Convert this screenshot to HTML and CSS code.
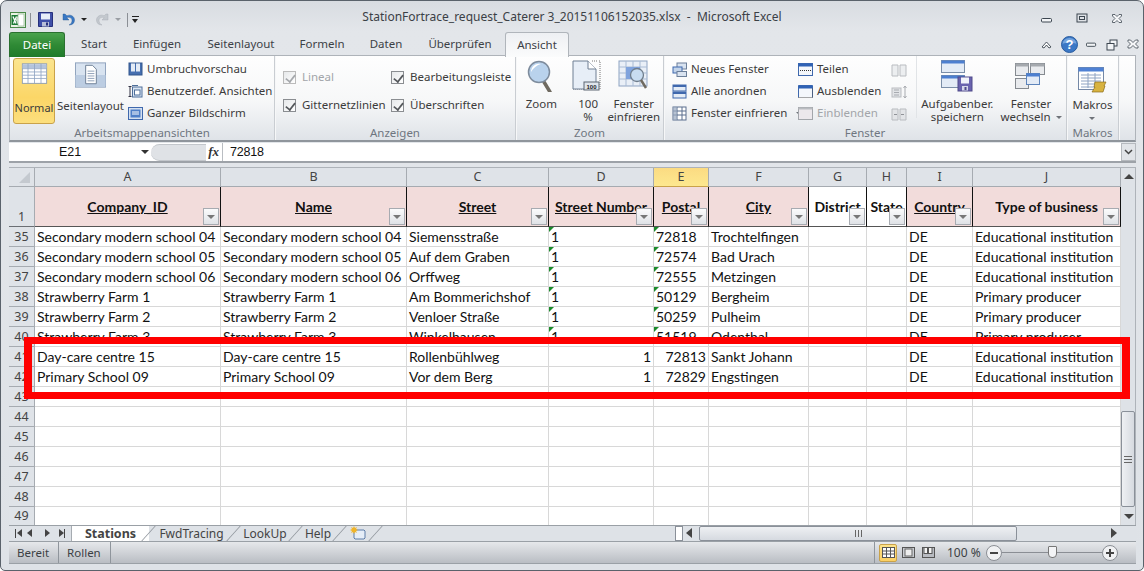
FILE: index.html
```html
<!DOCTYPE html>
<html lang="de">
<head>
<meta charset="utf-8">
<title>StationFortrace_request_Caterer 3_20151106152035.xlsx - Microsoft Excel</title>
<link rel="stylesheet" href="styles.css">
</head>
<body>
<div class="window">
  <header class="titlebar">
    <div class="qat">
      <svg class="i16" viewBox="0 0 16 16"><rect x=".5" y=".5" width="15" height="15" fill="#e9f3e4" stroke="#4b8a4a"/><rect x="8" y="2" width="6" height="12" fill="#fff" stroke="#7aa97a" stroke-width=".6"/><path d="M1.5 3h6.500l-2 5 2 5H1.500z" fill="#1d7a35"/><path d="M3 4.500l3 7M6.500 4.500l-3 7" stroke="#fff" stroke-width="1.300"/></svg>
      <span class="qsep"></span>
      <svg class="i15" viewBox="0 0 15 15"><path d="M.5.500h14v14H.5z" fill="#3f4fa8" stroke="#27307c"/><rect x="3" y="1.500" width="9" height="6" fill="#e8eef8"/><rect x="4" y="10" width="7" height="4.500" fill="#b9bfd8"/><rect x="8" y="10.500" width="2" height="3" fill="#27307c"/></svg>
      <svg class="i15 undo" viewBox="0 0 15 15"><path d="M2 2v6h6L5.800 5.800C8.500 4.600 11 6 11 8.500c0 2-1 3.500-3 4.500 3.500 0 5.500-2 5.500-5 0-4-4.500-6-7.600-4.200L4 2z" fill="#3978c4" stroke="#25568f" stroke-width=".4"/></svg>
      <span class="caret"></span>
      <svg class="i15 redo" viewBox="0 0 15 15"><path d="M13 2v6H7l2.200-2.200C6.500 4.600 4 6 4 8.500c0 2 1 3.500 3 4.500-3.500 0-5.500-2-5.500-5 0-4 4.500-6 7.600-4.200L11 2z" fill="#c3c8ce" stroke="#a4a9b0" stroke-width=".4"/></svg>
      <span class="caret off"></span>
      <span class="qsep second"></span>
      <span class="qatmenu"></span>
    </div>
    <div class="doctitle">StationFortrace_request_Caterer 3_20151106152035.xlsx&nbsp; -&nbsp; Microsoft Excel</div>
    <div class="winctl">
      <svg class="ctl" viewBox="0 0 12 12"><rect x=".5" y="5.500" width="10" height="3.500" rx="1" fill="#f2f4f6" stroke="#3c4650"/></svg>
      <svg class="ctl" viewBox="0 0 12 12"><rect x="1" y="1" width="10" height="8" fill="none" stroke="#3c4650"/><rect x="3.500" y="3.500" width="5" height="3" fill="none" stroke="#3c4650"/></svg>
      <svg class="ctl" viewBox="0 0 12 12"><path d="M1.500 1.500h2.500L6 3.500l2-2h2.500v1.500L8 5.500 10.500 8v1.500H8l-2-2-2 2H1.500V8L4 5.500 1.500 3z" fill="#f5f6f8" stroke="#3c4650" stroke-width=".8"/></svg>
    </div>
  </header>

  <nav class="tabs">
    <div class="tab file">Datei</div>
    <div class="tab">Start</div>
    <div class="tab">Einfügen</div>
    <div class="tab">Seitenlayout</div>
    <div class="tab">Formeln</div>
    <div class="tab">Daten</div>
    <div class="tab">Überprüfen</div>
    <div class="tab active">Ansicht</div>
    <div class="tabctl">
      <svg class="s11" viewBox="0 0 11 11"><path d="M1 8l4.500-5L10 8 8 9 5.500 6 3 9z" fill="#fff" stroke="#3c4650" stroke-width=".9"/></svg>
      <svg class="help" viewBox="0 0 17 17"><circle cx="8.500" cy="8.500" r="8" fill="#3b78c6" stroke="#2a5c9e"/><path d="M1.500 8a7 6 0 0 1 14 0c-4 -2-10 -2-14 0z" fill="#8fb8e8" opacity=".7"/><text x="8.500" y="13" class="qmark">?</text></svg>
      <svg class="s11" viewBox="0 0 12 12"><rect x=".5" y="4.500" width="10" height="3.500" rx="1" fill="#f2f4f6" stroke="#3c4650"/></svg>
      <svg class="s12" viewBox="0 0 12 12"><rect x="4" y="1" width="7" height="6" fill="#f2f4f6" stroke="#3c4650"/><rect x="1" y="4.500" width="7" height="6.500" fill="#f2f4f6" stroke="#3c4650"/></svg>
      <svg class="s12" viewBox="0 0 12 12"><path d="M1 1h2.500L6 3.500 8.500 1H11v1.500L8.500 5 11 7.500V9H8.500L6 6.500 3.500 9H1V7.500L3.500 5 1 2.500z" fill="#f5f6f8" stroke="#3c4650" stroke-width=".8"/></svg>
    </div>
  </nav>

  <section class="ribbon">
    <div class="group g-views">
      <div class="gbody">
        <div class="big selected normal">
          <svg class="bigicon" viewBox="0 0 32 32"><rect x="1" y="1" width="30" height="24" fill="#fff" stroke="#7f93b0"/><rect x="1.500" y="1.500" width="29" height="5" fill="#b4c4dc"/><path d="M1 7h30M1 11h30M1 15h30M1 19h30M8 1v24M16 1v24M24 1v24" stroke="#8ea3c2" stroke-width="1"/></svg>
          <span>Normal</span>
        </div>
        <div class="big pagelayout">
          <svg class="bigicon wide" viewBox="0 0 32 26"><rect x=".5" y=".5" width="31" height="25" fill="#d8e3f0" stroke="#8fa3bd"/><path d="M.5 13h31v12H.5z" fill="#bccde2"/><path d="M11 3h7l4 4v15H11z" fill="#fff" stroke="#6d7f96"/><path d="M13 9h7M13 11.500h7M13 14h7M13 16.500h7M13 19h7" stroke="#8ea0b8"/></svg>
          <span>Seitenlayout</span>
        </div>
        <ul class="smalllist">
          <li><svg class="sic" viewBox="0 0 15 15"><rect x="1" y="1" width="13" height="12" fill="#466fb0" stroke="#33568c"/><rect x="3" y="1.500" width="4" height="8" fill="#e4ebf5"/><rect x="8" y="1.500" width="4" height="8" fill="#e4ebf5"/></svg>Umbruchvorschau</li>
          <li><svg class="sic" viewBox="0 0 15 15"><path d="M.5 2.500h3M2 2.500v10M.5 12.500h3" stroke="#334" fill="none"/><rect x="4.500" y="3" width="9.500" height="10" fill="#dbe6f3" stroke="#4f6f9a"/><rect x="6.500" y="6" width="5.500" height="5" fill="#fff" stroke="#4f6f9a"/><path d="M4 1h6v1H4z" fill="#4f6f9a"/></svg>Benutzerdef. Ansichten</li>
          <li><svg class="sic" viewBox="0 0 15 15"><rect x=".5" y="1.500" width="14" height="12" fill="#d4e0f0" stroke="#3f68ad"/><rect x="2.500" y="3.500" width="10" height="8" fill="#4f7fc7"/><path d="M4 6h7M4 8h7" stroke="#fff"/></svg>Ganzer Bildschirm</li>
        </ul>
      </div>
      <div class="glabel">Arbeitsmappenansichten</div>
    </div>

    <div class="group g-show">
      <div class="gbody checks">
        <label class="chk off"><span class="box"></span>Lineal</label>
        <label class="chk"><span class="box"></span>Bearbeitungsleiste</label>
        <label class="chk"><span class="box"></span>Gitternetzlinien</label>
        <label class="chk"><span class="box"></span>Überschriften</label>
      </div>
      <div class="glabel">Anzeigen</div>
    </div>

    <div class="group g-zoom">
      <div class="gbody zoomrow">
        <div class="big">
          <svg class="icon32" viewBox="0 0 32 32"><path d="M19 22l6 10" stroke="#6f6a60" stroke-width="3.500" stroke-linecap="round"/><circle cx="14" cy="12" r="10.500" fill="#b9d2ec" stroke="#7d8b9c" stroke-width="1.500"/><path d="M6 12a8 8 0 0 1 10-8c-4 1-8 4-10 8z" fill="#fff"/></svg>
          <span>Zoom</span>
        </div>
        <div class="big">
          <svg class="icon32" viewBox="0 0 32 32"><path d="M20 1h5M27 1h1v28h-1M1 29h26" fill="none" stroke="#777" stroke-dasharray="1 1"/><path d="M1 1h15l8 8v20H1z" fill="#e7eef7" stroke="#6f7f93"/><path d="M16 1v8h8" fill="#fff" stroke="#6f7f93"/><rect x="12" y="22" width="15" height="8" fill="#dfe5ec" stroke="#5d6672"/><text x="19.500" y="29" class="hundred">100</text></svg>
          <span>100<br>%</span>
        </div>
        <div class="big">
          <svg class="icon32" viewBox="0 0 32 32"><rect x="1" y="1" width="28" height="25" fill="#e9eff7" stroke="#8ea3c2"/><path d="M1 7h28M1 13h28M1 19h28M8 1v25M15 1v25M22 1v25" stroke="#a9bbd4"/><rect x="8" y="7" width="14" height="12" fill="#7fa3dd"/><circle cx="19" cy="15" r="6.500" fill="#c8dcf0" stroke="#6f7d8c" stroke-width="1.300"/><path d="M23 20l5 8" stroke="#6f6a60" stroke-width="2.500"/></svg>
          <span>Fenster<br>einfrieren</span>
        </div>
      </div>
      <div class="glabel">Zoom</div>
    </div>

    <div class="group g-window">
      <div class="gbody windowrow">
        <ul class="smalllist col1">
          <li><svg class="sic" viewBox="0 0 15 15"><rect x="5" y="1" width="9.500" height="6" fill="#d9e3f0" stroke="#6c7f99"/><rect x="1" y="5" width="9" height="6" fill="#c3d4ea" stroke="#3f68ad"/><rect x="5" y="9.500" width="9.500" height="5" fill="#d9e3f0" stroke="#6c7f99"/></svg>Neues Fenster</li>
          <li><svg class="sic" viewBox="0 0 15 15"><rect x="1" y="1" width="13" height="6" fill="#e4ecf6" stroke="#3f68ad"/><rect x="1" y="1" width="13" height="2" fill="#3f68ad"/><rect x="1" y="8" width="13" height="6" fill="#e4ecf6" stroke="#3f68ad"/><rect x="1" y="8" width="13" height="2" fill="#3f68ad"/></svg>Alle anordnen</li>
          <li><svg class="sic" viewBox="0 0 15 15"><rect x="1" y="1" width="13" height="13" fill="#fff" stroke="#5b6f8e"/><path d="M1 5h13M1 9h13M5 1v13M10 1v13" stroke="#5b6f8e"/><rect x="1" y="1" width="4" height="13" fill="#98a8bf" opacity=".7"/></svg>Fenster einfrieren<span class="dd"></span></li>
        </ul>
        <ul class="smalllist col2">
          <li><svg class="sic" viewBox="0 0 15 15"><rect x=".5" y="1.500" width="14" height="12" fill="#f4f7fb" stroke="#3f68ad"/><rect x=".5" y="1.500" width="14" height="3" fill="#2f62b5"/><path d="M2 8.500h11" stroke="#333" stroke-dasharray="1 1"/></svg>Teilen</li>
          <li><svg class="sic" viewBox="0 0 15 15"><path d="M.5 13.500v-12h14v12" fill="#f4f7fb" stroke="#3f68ad"/><rect x=".5" y="1.500" width="14" height="3" fill="#2f62b5"/><path d="M.5 13.500h14M14.500 13.500V4" fill="none" stroke="#555" stroke-dasharray="1 1"/></svg>Ausblenden</li>
          <li class="off"><svg class="sic" viewBox="0 0 15 15"><rect x=".5" y="1.500" width="14" height="12" fill="#ece8ec" stroke="#a3a6ab"/><rect x=".5" y="1.500" width="14" height="2" fill="#b9bcc0"/></svg>Einblenden</li>
        </ul>
        <div class="compare">
          <svg class="cmp" viewBox="0 0 16 14"><path d="M1 2h6v11H1zM9 2h6v11H9z" fill="#eceef0" stroke="#b9bcc0"/></svg>
          <svg class="cmp" viewBox="0 0 16 14"><rect x="1" y="3" width="9" height="9" fill="#e2e4e7" stroke="#b9bcc0"/><path d="M3 5h5M3 7.500h5M3 10h5" stroke="#a8abb0"/><path d="M14 1v12M12.500 3L14 1l1.500 2M12.500 11l1.500 2 1.500-2" fill="none" stroke="#a8abb0"/></svg>
          <svg class="cmp" viewBox="0 0 16 14"><path d="M1 2h6v11H1zM9 2h6v11H9z" fill="#e2e4e7" stroke="#b9bcc0"/><path d="M3 7.500h3M10 7.500h3" stroke="#8f9297"/></svg>
        </div>
        <div class="big save">
          <svg class="icon32 wider" viewBox="0 0 32 32"><rect x=".5" y=".5" width="23" height="12" fill="#e3ebf6" stroke="#7b8ea8"/><rect x=".5" y=".5" width="23" height="3" fill="#4d7fd0"/><rect x=".5" y="15.500" width="23" height="12" fill="#e3ebf6" stroke="#7b8ea8"/><rect x=".5" y="15.500" width="23" height="3" fill="#4d7fd0"/><rect x="17" y="17" width="14" height="14" fill="#6a63ae" stroke="#4f4a8a"/><rect x="20" y="17.500" width="8" height="6" fill="#f1f3fa"/><rect x="21" y="26" width="6" height="4.500" fill="#d6d8ea"/><rect x="23.500" y="27" width="2" height="3" fill="#4f4a8a"/></svg>
          <span>Aufgabenber.<br>speichern</span>
        </div>
        <div class="big switch">
          <svg class="icon32 wider" viewBox="0 0 32 32"><rect x=".5" y="3.500" width="13" height="12" fill="#e9ebee" stroke="#858a90"/><rect x=".5" y="3.500" width="13" height="3" fill="#a5a9ae"/><rect x="15.500" y="3.500" width="14" height="11" fill="#e9ebee" stroke="#858a90"/><rect x="15.500" y="3.500" width="14" height="3" fill="#a5a9ae"/><rect x=".5" y="18.500" width="13" height="10" fill="#e9ebee" stroke="#858a90"/><rect x="11.500" y="13.500" width="13" height="11" fill="#e3ebf6" stroke="#5d84bb"/><rect x="11.500" y="13.500" width="13" height="3" fill="#4d7fd0"/></svg>
          <span>Fenster<br>wechseln<i class="dd"></i></span>
        </div>
      </div>
      <div class="glabel">Fenster</div>
    </div>

    <div class="group g-macro">
      <div class="gbody macrorow">
        <div class="big">
          <svg class="icon30" viewBox="0 0 30 26"><rect x=".5" y=".5" width="25" height="22" fill="#fff" stroke="#7488a6"/><rect x=".5" y=".5" width="25" height="4" fill="#4f81d4"/><path d="M3 8h20M3 11h20M3 14h20M3 17h20M3 20h20M10 6v15M17 6v15" stroke="#8ea3c2"/><path d="M17 15h11l-2 4h1l-2 6H14l3-5h-1z" fill="#d8b340" stroke="#8c6f1d" stroke-width=".7"/></svg>
          <span>Makros<br><i class="dd solo"></i></span>
        </div>
      </div>
      <div class="glabel">Makros</div>
    </div>
  </section>

  <div class="formula">
    <div class="namebox">E21<span class="ncaret"></span></div>
    <div class="fxzone"><span class="oval"></span><span class="fx">fx</span></div>
    <div class="fvalue">72818</div>
    <div class="fdrop"><svg class="chev" viewBox="0 0 9 6"><path d="M1 1l3.500 3.500L8 1" fill="none" stroke="#444" stroke-width="1.500"/></svg></div>
  </div>

  <main class="workbook">
    <table class="sheet">
      <colgroup><col class="c0"><col class="c1"><col class="c1"><col class="c3"><col class="c4"><col class="c5"><col class="c6"><col class="c7"><col class="c8"><col class="c9"><col class="c10"></colgroup>
      <thead>
        <tr class="letters"><th class="corner"><span class="tri"></span></th><th>A</th><th>B</th><th>C</th><th>D</th><th class="sel">E</th><th>F</th><th>G</th><th>H</th><th>I</th><th>J</th></tr>
      </thead>
      <tbody>
        <tr class="head">
          <th class="rn">1</th>
          <td><u>Company_ID</u><span class="filter"></span></td>
          <td><u>Name</u><span class="filter"></span></td>
          <td><u>Street</u><span class="filter"></span></td>
          <td><u>Street Number</u><span class="filter"></span></td>
          <td><u>Postal</u><span class="filter"></span></td>
          <td><u>City</u><span class="filter"></span></td>
          <td class="plain">District<span class="filter"></span></td>
          <td class="plain">State<span class="filter"></span></td>
          <td><u>Country</u><span class="filter"></span></td>
          <td>Type of business<span class="filter"></span></td>
        </tr>
        <tr><th class="rn">35</th><td>Secondary modern school 04</td><td>Secondary modern school 04</td><td>Siemensstraße</td><td class="txt">1</td><td class="txt">72818</td><td>Trochtelfingen</td><td></td><td></td><td>DE</td><td>Educational institution</td></tr>
        <tr><th class="rn">36</th><td>Secondary modern school 05</td><td>Secondary modern school 05</td><td>Auf dem Graben</td><td class="txt">1</td><td class="txt">72574</td><td>Bad Urach</td><td></td><td></td><td>DE</td><td>Educational institution</td></tr>
        <tr><th class="rn">37</th><td>Secondary modern school 06</td><td>Secondary modern school 06</td><td>Orffweg</td><td class="txt">1</td><td class="txt">72555</td><td>Metzingen</td><td></td><td></td><td>DE</td><td>Educational institution</td></tr>
        <tr><th class="rn">38</th><td>Strawberry Farm 1</td><td>Strawberry Farm 1</td><td>Am Bommerichshof</td><td class="txt">1</td><td class="txt">50129</td><td>Bergheim</td><td></td><td></td><td>DE</td><td>Primary producer</td></tr>
        <tr><th class="rn">39</th><td>Strawberry Farm 2</td><td>Strawberry Farm 2</td><td>Venloer Straße</td><td class="txt">1</td><td class="txt">50259</td><td>Pulheim</td><td></td><td></td><td>DE</td><td>Primary producer</td></tr>
        <tr><th class="rn">40</th><td>Strawberry Farm 3</td><td>Strawberry Farm 3</td><td>Winkelhausen</td><td class="txt">1</td><td class="txt">51519</td><td>Odenthal</td><td></td><td></td><td>DE</td><td>Primary producer</td></tr>
        <tr><th class="rn">41</th><td>Day-care centre 15</td><td>Day-care centre 15</td><td>Rollenbühlweg</td><td class="num">1</td><td class="num">72813</td><td>Sankt Johann</td><td></td><td></td><td>DE</td><td>Educational institution</td></tr>
        <tr><th class="rn">42</th><td>Primary School 09</td><td>Primary School 09</td><td>Vor dem Berg</td><td class="num">1</td><td class="num">72829</td><td>Engstingen</td><td></td><td></td><td>DE</td><td>Educational institution</td></tr>
        <tr><th class="rn">43</th><td></td><td></td><td></td><td></td><td></td><td></td><td></td><td></td><td></td><td></td></tr>
        <tr><th class="rn">44</th><td></td><td></td><td></td><td></td><td></td><td></td><td></td><td></td><td></td><td></td></tr>
        <tr><th class="rn">45</th><td></td><td></td><td></td><td></td><td></td><td></td><td></td><td></td><td></td><td></td></tr>
        <tr><th class="rn">46</th><td></td><td></td><td></td><td></td><td></td><td></td><td></td><td></td><td></td><td></td></tr>
        <tr><th class="rn">47</th><td></td><td></td><td></td><td></td><td></td><td></td><td></td><td></td><td></td><td></td></tr>
        <tr><th class="rn">48</th><td></td><td></td><td></td><td></td><td></td><td></td><td></td><td></td><td></td><td></td></tr>
        <tr class="last"><th class="rn">49</th><td></td><td></td><td></td><td></td><td></td><td></td><td></td><td></td><td></td><td></td></tr>
      </tbody>
    </table>
    <div class="vscroll">
      <span class="arrow up"></span>
      <span class="vthumb"><span class="grip"></span></span>
      <span class="arrow down"></span>
    </div>
    <div class="callout"></div>
  </main>

  <div class="sheetbar">
    <div class="navs"><span class="nv first"></span><span class="nv prev"></span><span class="nv next"></span><span class="nv lastn"></span></div>
    <div class="stab current">Stations</div>
    <div class="stab fwd">FwdTracing</div>
    <div class="stab look">LookUp</div>
    <div class="stab hlp">Help</div>
    <div class="stab new"><svg class="newsheet" viewBox="0 0 16 14"><path d="M4 4h10l1 1v7l-1 1H5l-1-1z" fill="#e5edf7" stroke="#5d7ca8"/><path d="M4 0l1 2 2-1-1 2 2 1-2 1 1 2-2-1-1 2-1-2-2 1 1-2-2-1 2-1-1-2 2 1z" fill="#f0b429"/></svg></div>
    <div class="spacer"></div>
    <div class="splitter"></div>
    <div class="hscroll">
      <span class="arrow left"></span>
      <span class="hthumb"><span class="hgrip"></span></span>
      <span class="arrow right"></span>
    </div>
    <div class="cornerbox"></div>
  </div>

  <footer class="status">
    <span class="st">Bereit</span>
    <span class="st">Rollen</span>
    <span class="spacer"></span>
    <div class="views">
      <span class="vb on"><svg class="vic" viewBox="0 0 13 11"><rect x=".5" y=".5" width="12" height="10" fill="#fff" stroke="#555"/><path d="M.5 4h12M.5 7h12M4.500.500v10M8.500.500v10" stroke="#555"/></svg></span>
      <span class="vb"><svg class="vic" viewBox="0 0 13 11"><rect x=".5" y=".5" width="12" height="10" fill="#c9ccd1" stroke="#555"/><rect x="3" y="2" width="7" height="7" fill="#eee" stroke="#666"/></svg></span>
      <span class="vb"><svg class="vic" viewBox="0 0 13 11"><rect x=".5" y=".5" width="12" height="10" fill="#b9bcc2" stroke="#555"/><rect x="2" y=".5" width="3.500" height="6" fill="#f4f4f4" stroke="#555"/><rect x="6.500" y=".5" width="3.500" height="6" fill="#f4f4f4" stroke="#555"/></svg></span>
    </div>
    <span class="pct">100 %</span>
    <div class="slider">
      <svg class="rb" viewBox="0 0 16 16"><circle cx="8" cy="8" r="7.500" fill="#f0f1f3" stroke="#8a8e94"/><rect x="4" y="7" width="8" height="2" fill="#444"/></svg>
      <span class="track"><span class="thumb"></span></span>
      <svg class="rb" viewBox="0 0 16 16"><circle cx="8" cy="8" r="7.500" fill="#f0f1f3" stroke="#8a8e94"/><path d="M4 7h3V4h2v3h3v2H9v3H7V9H4z" fill="#444"/></svg>
    </div>
    <span class="sgrip"></span>
  </footer>
</div>
</body>
</html>
```
FILE: styles.css
```css
* { box-sizing: border-box; }
html, body { margin: 0; padding: 0; height: 100%; background: #fff; overflow: hidden; }
svg { display: block; flex: none; }
ul { list-style: none; margin: 0; padding: 0; }

.window {
  width: 1144px; height: 571px;
  display: flex; flex-direction: column;
  padding: 0 7px 0 8px;
  background: linear-gradient(#d8dce1, #e3e6ea 30px, #dee2e7);
  border: 1px solid #5a626b;
  border-radius: 7px 7px 5px 5px;
  font: 11.500px/14px "Noto Sans", sans-serif;
  color: #3b3b3b;
  position: relative;
}

/* title bar */
.titlebar { height: 31px; margin-left: -7px; margin-right: -6px; display: flex; align-items: flex-start; position: relative; flex: none; }
.qat { display: flex; align-items: center; margin: 10px 0 0 8px; height: 17px; }
.i16 { width: 16px; height: 16px; }
.i15 { width: 15px; height: 15px; }
.qsep { width: 1px; height: 14px; background: #8b8f95; margin: 0 7px 0 4px; }
.qsep.second { margin: 0 4px 0 6px; }
.undo { margin-left: 8px; }
.redo { margin-left: 8px; }
.caret { width: 0; height: 0; margin-left: 5px; border: 3px solid transparent; border-top: 3px solid #222; border-bottom: 0; }
.caret.off { border-top-color: #9a9ea4; }
.qatmenu { width: 7px; height: 7px; border-top: 1px solid #222; position: relative; }
.qatmenu::after { content: ""; position: absolute; left: 0; top: 2px; border: 3.500px solid transparent; border-top: 4px solid #222; border-bottom: 0; }
.doctitle { position: absolute; left: 0; right: 0; top: 8px; text-align: center; font-size: 12px; line-height: 16px; color: #3b4045; padding-left: 0; white-space: nowrap; }
.winctl { position: absolute; right: 19px; top: 12px; display: flex; gap: 23px; }
.ctl { width: 12px; height: 12px; }

/* tabs */
.tabs { height: 24px; display: grid; grid-template-columns: 56px 58px 68px 100px 62px 66px 82px 68px 1fr; flex: none; position: relative; z-index: 1; margin-bottom: -1px; }
.tab { line-height: 24px; text-align: center; color: #3c4146; white-space: nowrap; }
.tab.file { background: linear-gradient(#4aa24d, #2f8a35 50%, #1f7a2b); color: #fff; border: 1px solid #2a7030; border-bottom: 0; border-radius: 3px 3px 0 0; }
.tab.active { margin-left: 4px; background: linear-gradient(#eef0f3, #fbfcfc); border: 1px solid #b0b5bb; border-bottom: 0; border-radius: 3px 3px 0 0; }
.tabctl { display: flex; justify-content: flex-end; align-items: center; margin-right: -3px; }
.s11 { width: 11px; height: 11px; margin-right: 9px; }
.s12 { width: 12px; height: 12px; margin-left: 9px; }
.tabctl .s11:nth-child(3) { margin: 0; margin-left: 8px; }
.help { width: 17px; height: 17px; }
.qmark { font: bold 13px "Liberation Sans", sans-serif; fill: #fff; text-anchor: middle; }

/* ribbon */
.ribbon { height: 87px; display: grid; grid-template-columns: 265px 241px 148px 403px 52px 1fr; background: linear-gradient(#fefefe, #f6f7f8 55%, #dfe3e8); border: 1px solid #aeb3b9; border-bottom: 2px solid #8f959c; flex: none; }
.group { display: flex; flex-direction: column; border-right: 1px solid #c9cdd2; box-shadow: 1px 0 0 #f6f7f8; min-width: 0; }
.gbody { height: 70px; display: flex; }
.glabel { text-align: center; line-height: 14px; padding-top: 0; color: #6f7680; font-size: 11.500px; }
.big { display: flex; flex-direction: column; align-items: center; text-align: center; line-height: 13px; color: #3b3b3b; white-space: nowrap; }
.big span { display: block; }
.big.selected { background: linear-gradient(#fbe58f, #fbd667 60%, #fcdf7d); border: 1px solid #c9a24a; border-radius: 3px; }
.normal { width: 42px; height: 66px; margin: 2px 0 0 3px; padding-top: 4px; font-size: 11px; }
.normal .bigicon { margin-left: 0; }
.bigicon { width: 31px; height: 26px; margin-bottom: 8px; }
.normal span { margin-top: 4px; }
.pagelayout { width: 71px; padding-top: 6px; }
.pagelayout span { margin-top: 6px; }
.bigicon.wide { margin-bottom: 5px; }
.smalllist { display: flex; flex-direction: column; padding-top: 2px; white-space: nowrap; }
.smalllist li { height: 22px; display: flex; align-items: center; gap: 4px; }
.smalllist li.off { color: #a2a5a9; }
.sic { width: 15px; height: 15px; }
.g-views .smalllist { margin-left: 2px; }

.checks { display: grid; grid-template-columns: 108px 1fr; grid-template-rows: 14px 14px; row-gap: 14px; padding: 14px 0 0 8px; }
.chk { display: flex; align-items: center; gap: 6px; white-space: nowrap; }
.chk.off { color: #a2a5a9; }
.box { width: 13px; height: 13px; border: 1px solid #8a8d91; background: linear-gradient(135deg, #e6e8ea, #fff); position: relative; flex: none; }
.box::after { content: ""; position: absolute; left: 3px; top: 0; width: 5px; height: 9px; border-right: 2px solid #55585c; border-bottom: 2px solid #55585c; transform: rotate(38deg) scale(.85); }
.chk.off .box { border-color: #bbb; }
.chk.off .box::after { border-color: #a5a8ac; }

.zoomrow { padding: 4px 0 0 0; }
.g-zoom .big:nth-child(1) { width: 52px; margin-left: 0; }
.g-zoom .big:nth-child(2) { width: 38px; margin-left: 3px; }
.g-zoom .big:nth-child(3) { width: 60px; margin-left: -2px; }
.icon32 { width: 32px; height: 32px; margin-bottom: 5px; }
.icon30 { width: 30px; height: 26px; margin: 7px 0 5px; }
.icon32.wider { width: 32px; }
.hundred { font: bold 6px "Liberation Sans", sans-serif; text-anchor: middle; fill: #222; }

.windowrow { padding-top: 0; }
.g-window .col1 { width: 126px; margin-left: 8px; }
.g-window .col2 { width: 96px; }
.g-window .smalllist li { gap: 4px; }
.dd { display: inline-block; width: 0; height: 0; margin-left: 5px; border: 3px solid transparent; border-top: 3px solid #6f7379; border-bottom: 0; vertical-align: middle; }
.dd.solo { margin: 0; }
.compare { width: 26px; display: flex; flex-direction: column; padding-top: 7px; gap: 8px; border-right: 1px solid #e1e4e7; height: 62px; box-shadow: 0 0 0 transparent; }
.cmp { width: 16px; height: 14px; }
.save { width: 84px; margin-left: 0; padding-top: 4px; }
.switch { width: 72px; margin-left: -2px; padding-top: 4px; }
.macrorow { justify-content: center; }
.macrorow .big { padding-top: 4px; width: 52px; }

/* formula bar */
.formula { height: 20px; margin-top: 1px; display: flex; background: #fff; border: 1px solid #9da2a8; border-width: 0 0 2px; flex: none; font: 12.500px/18px "Liberation Sans", sans-serif; color: #111; }
.namebox { width: 142px; padding-left: 50px; position: relative; }
.ncaret { position: absolute; right: 2px; top: 7px; border: 4px solid transparent; border-top: 4px solid #333; border-bottom: 0; }
.fxzone { width: 72px; background: #fff; position: relative; border-right: 1px solid #b9bdc2; }
.oval { position: absolute; left: 0; top: 1px; width: 55px; height: 17px; background: #dfe2e6; border-radius: 9px 0 0 9px; border: 1px solid #c3c7cc; border-width: 1px 0; }
.fx { position: absolute; right: 3px; top: 0; font: italic bold 13px/18px "Liberation Serif", serif; color: #333; }
.fvalue { flex: 1; padding-left: 7px; letter-spacing: -.2px; }
.fdrop { width: 15px; background: #e1e4e8; border: 1px solid #b5b9be; display: flex; justify-content: center; align-items: center; }
.chev { width: 9px; height: 6px; }

/* sheet */
.workbook { height: 358px; margin-top: 4px; display: flex; position: relative; overflow: hidden; flex: none; border-top: 1px solid #aeb3b9; }
.sheet { width: 1112px; table-layout: fixed; border-collapse: separate; border-spacing: 0; background: #fff; font: 14px/18px Lato, sans-serif; color: #111; flex: none; align-self: flex-start; }
.c0 { width: 26px; } .c1 { width: 186px; } .c3 { width: 142px; } .c4 { width: 105px; } .c5 { width: 55px; }
.c6 { width: 100px; } .c7 { width: 58px; } .c8 { width: 40px; } .c9 { width: 66px; } .c10 { width: 148px; }
.letters th { height: 19px; background: #dfe3e8; border-right: 1px solid #a6abb1; border-bottom: 1px solid #a6abb1; font: 400 12.500px/18px "Noto Sans", sans-serif; color: #444; padding: 0; }
.letters .sel { background: linear-gradient(#fbdb82, #fde88f); color: #444; border-bottom-color: #c9a24a; }
.corner { position: relative; }
.tri { position: absolute; right: 4px; bottom: 3px; border-left: 11px solid transparent; border-bottom: 11px solid #c4c9cf; }
.rn { background: #dfe3e8; border-right: 1px solid #a6abb1; border-bottom: 1px solid #a6abb1; font: 400 12.500px/18px "Noto Sans", sans-serif; color: #444; padding: 0; text-align: center; }
tbody td { height: 20px; padding: 0 2px; border-right: 1px solid #d8d8d8; border-bottom: 1px solid #d8d8d8; white-space: nowrap; overflow: hidden; position: relative; letter-spacing: 0; }
tbody tr.last td, tbody tr.last th { height: 18px; border-bottom: 0; }
.head th { height: 40px; vertical-align: bottom; border-bottom: 1px solid #6b6f74; }
.head td { height: 40px; background: #f2dcdb; font-weight: 700; text-align: center; border-right: 1px solid #111; border-bottom: 1px solid #555; overflow: hidden; }
.head td.plain { background: #fff; }
.filter { position: absolute; right: 1px; bottom: 1px; width: 16px; height: 17px; background: linear-gradient(#fbfbfc, #dfe2e6); border: 1px solid #a7abb1; }
.filter::after { content: ""; position: absolute; left: 3px; top: 6px; border: 4px solid transparent; border-top: 4px solid #777; border-bottom: 0; }
td.txt::before { content: ""; position: absolute; left: 0; top: 0; border-top: 5px solid #1c8a2c; border-right: 5px solid transparent; }
td.num { text-align: right; }

/* scrollbars */
.vscroll { width: 16px; height: 100%; background: #dee2e7; position: relative; border-right: 1px solid #aeb3b9; }
.arrow { position: absolute; width: 0; height: 0; border: 5px solid transparent; }
.arrow.up { left: 3px; top: 6px; border-bottom: 5px solid #444; border-top: 0; }
.arrow.down { left: 3px; bottom: 6px; border-top: 5px solid #444; border-bottom: 0; }
.vthumb { position: absolute; left: 0; right: 0; top: 243px; height: 96px; background: linear-gradient(90deg, #eef0f3, #d6dae0); border: 1px solid #8a9099; border-radius: 2px; display: flex; align-items: center; justify-content: center; }
.grip { width: 8px; height: 7px; border-top: 1px solid #666; border-bottom: 1px solid #666; position: relative; }
.grip::after { content: ""; position: absolute; left: 0; right: 0; top: 2px; height: 1px; background: #666; }

.callout { position: absolute; left: 15px; top: 169px; width: 1106px; height: 62px; border: solid #f00; border-width: 7px 8px; pointer-events: none; }

/* sheet tabs */
.sheetbar { height: 16px; display: flex; flex: none; background: #dee2e7; border-top: 1px solid #9aa0a6; font-size: 12px; line-height: 15px; }
.navs { width: 63px; display: flex; align-items: center; justify-content: space-around; padding: 0 2px; border-right: 1px solid #a6abb1; }
.nv { width: 6px; height: 9px; position: relative; }
.nv::after { content: ""; position: absolute; top: 0; border: 4.500px solid transparent; }
.prev::after, .first::after { left: -3px; border-right: 5px solid #444; border-left: 0; }
.next::after, .lastn::after { left: 1px; border-left: 5px solid #444; border-right: 0; }
.first { border-left: 1px solid #444; }
.first::after { left: 1px; }
.lastn { border-right: 1px solid #444; }
.lastn::after { left: 0; }
.stab { position: relative; text-align: center; color: #444; white-space: nowrap; }
.stab::after { content: ""; position: absolute; right: 0; top: 0; width: 1px; height: 15px; background: #8f959c; transform: skewX(-42deg); }
.current { width: 77px; background: #fff; font-weight: 700; font-size: 12.500px; margin-left: 0; }
.fwd { width: 85px; }
.look { width: 62px; }
.hlp { width: 44px; }
.new { width: 36px; display: flex; justify-content: center; }
.newsheet { width: 16px; height: 14px; }
.spacer { flex: 1; }
.splitter { width: 8px; height: 15px; background: #fff; border: 1px solid #8a9099; position: relative; }
.hscroll { width: 436px; position: relative; margin-left: 1px; }
.arrow.left { left: 2px; top: 2px; border-right: 6px solid #444; border-left: 0; }
.arrow.right { right: 3px; top: 2px; border-left: 6px solid #444; border-right: 0; }
.hthumb { position: absolute; left: 15px; width: 318px; top: 0; height: 15px; background: linear-gradient(#eef0f3, #d6dae0); border: 1px solid #8a9099; border-radius: 2px; display: flex; justify-content: center; align-items: center; }
.hgrip { width: 7px; height: 7px; border-left: 1px solid #666; border-right: 1px solid #666; position: relative; }
.hgrip::after { content: ""; position: absolute; top: 0; bottom: 0; left: 2px; width: 1px; background: #666; }
.cornerbox { width: 16px; }

/* status */
.status { height: 23px; display: flex; align-items: center; flex: none; background: linear-gradient(#e6e8eb, #b9bdc3); border: solid #9aa0a6; border-width: 1px 0; color: #3b3f44; font-size: 11.500px; }
.st { padding: 0 9px 0 8px; height: 100%; line-height: 21px; border-right: 1px solid #8f959c; }
.views { display: flex; align-items: center; gap: 2px; border-left: 1px solid #8f959c; padding-left: 4px; height: 100%; }
.vb { width: 18px; height: 18px; display: flex; align-items: center; justify-content: center; }
.vb.on { background: linear-gradient(#fde38a, #fbd063); border: 1px solid #c9a24a; border-radius: 2px; }
.vic { width: 13px; height: 11px; }
.pct { margin-left: 10px; font-size: 12px; width: 36px; }
.slider { display: flex; align-items: center; margin-left: 3px; }
.rb { width: 16px; height: 16px; }
.track { width: 100px; height: 1px; background: #8a8e94; position: relative; }
.thumb { position: absolute; left: 46px; top: -6px; width: 9px; height: 12px; background: #f3f4f6; border: 1px solid #777; border-radius: 1px 1px 4px 4px; }
.sgrip { width: 18px; }
```
